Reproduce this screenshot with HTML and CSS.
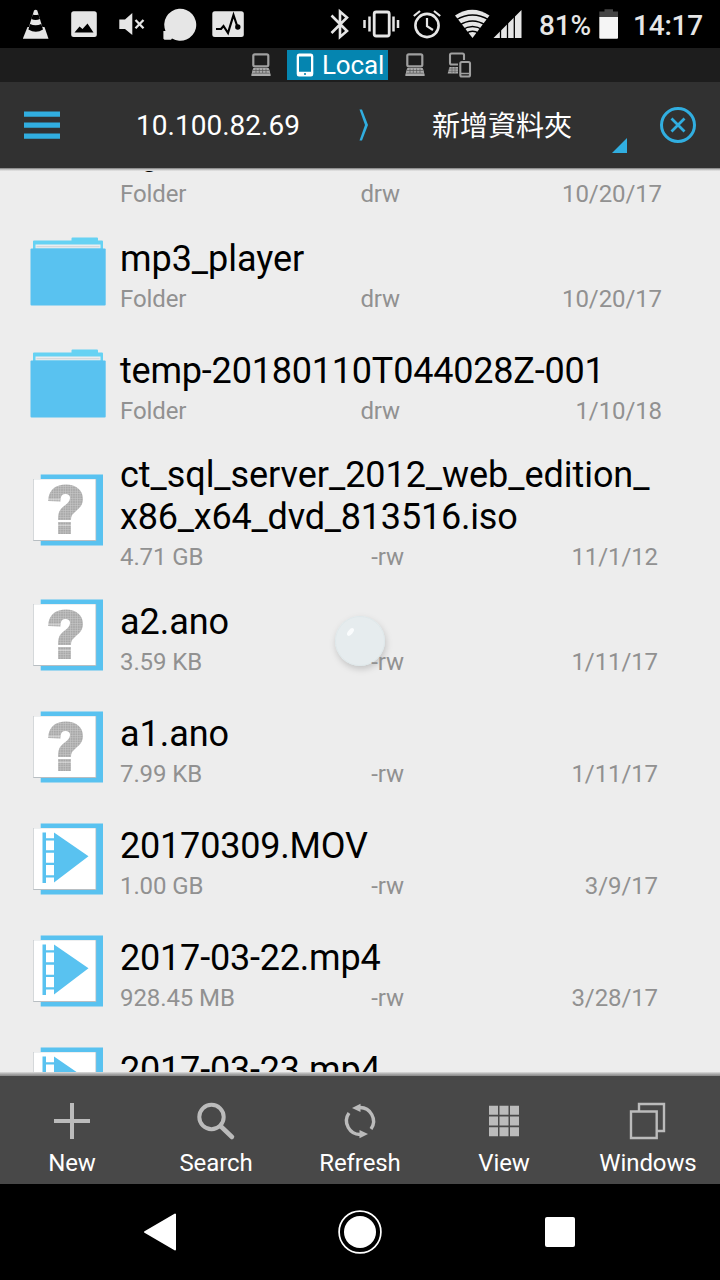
FILE: index.html
```
<!DOCTYPE html>
<html lang="en">
<head>
<meta charset="utf-8">
<title>File manager</title>
<link rel="stylesheet" href="styles.css">
</head>
<body>
<svg class="defs" width="0" height="0">
  <defs>
    <pattern id="weave" width="2.4" height="2.4" patternUnits="userSpaceOnUse">
      <rect width="2.4" height="2.4" fill="#a8a8a8"/>
      <path d="M0 2.1H2.4M2.1 0V2.4" stroke="#c8c8c8" stroke-width=".6"/>
    </pattern>
    <symbol id="folder" viewBox="0 0 80 80">
      <path d="M3 19V9.500a1 1 0 0 1 1-1H41.500V6.500a1 1 0 0 1 1-1H67a1 1 0 0 1 1 1V8.500H72a1 1 0 0 1 1 1V19z" fill="#66d2f3"/>
      <path d="M5.500 12.500h65v4h-65z" fill="#e9edf0"/>
      <path d="M6.500 14.700h63" stroke="#c9cdd0" stroke-width=".8"/>
      <rect x=".5" y="16.500" width="75.200" height="57" rx="1" fill="#59c2f0"/>
    </symbol>
    <symbol id="sheet" viewBox="0 0 80 80">
      <path d="M10.700 4.500H73V75.500H10.700z" fill="#59c2f0"/>
      <path d="M3.200 9H66.200V71H3.200z" fill="#b8bec2"/>
      <path d="M3.700 9.300H65.500V70H3.700z" fill="#fff"/>
    </symbol>
    <symbol id="unknown" viewBox="0 0 80 80">
      <use href="#sheet"/>
      <path d="M18 31C19 19 26 14.500 36 14.500C46 14.500 53 20 53 29C53 36 48 39 44 43C41.500 45 41 47 41 50H28C28 43 29 40 34 36C38 33 40 31 40 28C40 25 38 24 35 24C31.500 24 30.500 27 30.500 31.500ZM28 52H41V64H28Z" fill="url(#weave)"/>
      <path d="M18 29.300H30M28 55.300H41" stroke="#fff" stroke-width=".5"/>
    </symbol>
    <symbol id="video" viewBox="0 0 80 80">
      <use href="#sheet"/>
      <path d="M12.500 13.500H16V19.300H24V13.500L58.500 37.200L24 63.500V58.500H16V64H12.500ZM16 21.500V31.300H24V21.500ZM16 33.700V43.700H24V33.700ZM16 46V56.200H24V46Z" fill="#59c2f0" fill-rule="evenodd"/>
    </symbol>
    <symbol id="laptop" viewBox="0 0 20 24">
      <rect x="2.300" y="1.300" width="15" height="12" rx="1.500" fill="none" stroke="#a0a0a0" stroke-width="2.200"/>
      <path d="M2.500 15.500H17.500L19.300 22.500H.7Z" fill="#aaa" stroke="#aaa" stroke-linejoin="round"/>
      <path d="M2 17.500H18M1.500 20.200H18.500M5 15.500V20M8.300 15.500V20M11.600 15.500V20M15 15.500V20" stroke="#555" stroke-width=".7"/>
    </symbol>
  </defs>
</svg>
<main class="screen">
  <div class="status">
    <svg viewBox="23 0 48 48" width="48" height="48"><path d="M27.500 27H44.500L48.500 38.700H22.800Z" fill="#e6e6e6"/><path d="M34 10.500Q35.700 9 37.300 10.500L43.300 30Q36 34 28 30Z" fill="#e6e6e6"/><path d="M32.800 14.500Q35.600 15.500 38.500 14.500L40 19Q35.600 21 31.300 19ZM30 24Q35.600 26.500 41.300 24L43 29.500Q36 34 28.400 29.500Z" fill="#000"/></svg>
    <svg viewBox="71 0 48 48" width="48" height="48"><rect x="71.200" y="11.300" width="25.600" height="25.700" rx="2.500" fill="#e6e6e6"/><path d="M74.500 32.500L79.500 26.500L82.500 29L87.500 23.500L93.500 32.500Z" fill="#000"/></svg>
    <svg viewBox="119 0 44 48" width="44" height="48"><path d="M119.300 19.500H125L132.300 13V35L125 29H119.300Z" fill="#e6e6e6"/><path d="M135.500 20L143.500 28.300M143.500 20L135.500 28.300" stroke="#e6e6e6" stroke-width="2.300"/></svg>
    <svg viewBox="163 0 49 48" width="49" height="48"><path d="M163.400 31H165.500A16 16 0 1 1 172 38.500L171 39.700H164.500L163.400 38.700Z" fill="#e6e6e6"/></svg>
    <svg viewBox="212 0 118 48" width="118" height="48"><rect x="212.300" y="11.300" width="31.500" height="25.700" rx="2.500" fill="#e6e6e6"/><path d="M216 29H221L223.500 26L228 33L233.500 15L237.500 27" fill="none" stroke="#000" stroke-width="2.200"/><circle cx="237.800" cy="27" r="2.700"/></svg>
    <svg viewBox="330 0 33 48" width="33" height="48"><path d="M331.500 15.500L347 31L340 37V11.500L347 17.500L331.500 33" fill="none" stroke="#e6e6e6" stroke-width="2.600"/></svg>
    <svg viewBox="363 0 50 48" width="50" height="48"><rect x="374.200" y="12" width="15" height="24" rx="2" fill="none" stroke="#e6e6e6" stroke-width="2.800"/><path d="M364.500 20V28M369.500 16.500V31.500M393.500 16.500V31.500M398 20V28" stroke="#e6e6e6" stroke-width="2.500"/></svg>
    <svg viewBox="413 0 42 48" width="42" height="48"><circle cx="427" cy="25.500" r="11.600" fill="none" stroke="#e6e6e6" stroke-width="2.600"/><path d="M427 18V26.200L433 30M413.800 16L420 11M434 11L440.200 16" fill="none" stroke="#e6e6e6" stroke-width="2.200"/></svg>
    <svg viewBox="455 0 38 48" width="38" height="48"><path d="M455 15.500Q472.200 4 489.500 15.500L472.500 38Z" fill="#e6e6e6"/><path d="M456 20Q472.500 10 489 20M459 25.500Q472.500 16.500 486 25.500M462 30Q472.500 23 483 30M466 33.500Q472.500 29 479 33.500" fill="none" stroke="#000" stroke-width="1.300"/></svg>
    <svg viewBox="493 0 46 48" width="46" height="48"><path d="M493.500 38L521.500 10V38Z" fill="#e6e6e6"/><path d="M500.500 25V38M507.500 20V38M514.300 12V38" stroke="#000" stroke-width="1.300"/></svg>
    <span class="status-text">81%</span>
    <svg viewBox="599 0 36 48" width="36" height="48"><path d="M599.300 17V11.500H604.500V9.300H613V11.500H618V17Z" fill="#444"/><path d="M599.300 17H618V37.500Q618 38.700 617 38.700H600.300Q599.300 38.700 599.300 37.500Z" fill="#f5f5f5"/></svg>
    <span class="status-text clock">14:17</span>
  </div>

  <div class="tabs">
    <svg width="20" height="24"><use href="#laptop"/></svg>
    <div class="tab-active">
      <svg width="18" height="24" viewBox="0 0 18 24"><path fill-rule="evenodd" fill="#fff" d="M3 .5H15Q17.300 .5 17.300 3V21Q17.300 23.500 15 23.500H3Q.7 23.500 .7 21V3Q.7 .5 3 .5ZM3 3.500V18.700H15V3.500Z"/><circle cx="9" cy="21" r="1.100" fill="#0585b0"/></svg>
      <span>Local</span>
    </div>
    <svg class="tab-second" width="20" height="24"><use href="#laptop"/></svg>
    <svg class="tab-third" width="25" height="26" viewBox="0 0 25 26"><path d="M11 12.500H4.500Q3 12.500 3 11V3Q3 1.500 4.500 1.500H15.500Q17 1.500 17 3V8" fill="none" stroke="#a0a0a0" stroke-width="2.100"/><path d="M2.500 15H11V21.500H.7Z" fill="#aaa"/><path d="M1.500 17H11M1 19.300H11M5 15V21M8 15V21" stroke="#555" stroke-width=".6"/><rect x="13.300" y="10" width="9.700" height="14.500" rx="1.500" fill="#1d1d1d" stroke="#a0a0a0" stroke-width="2.100"/><path d="M14 21.500H22.500" stroke="#a0a0a0" stroke-width="1.500"/></svg>
  </div>

  <header class="header">
    <svg class="menu" width="36" height="28" viewBox="0 0 36 28"><path d="M0 .5H36V5.800H0ZM0 11.500H36V16.800H0ZM0 22.500H36V27.800H0Z" fill="#31aee0"/></svg>
    <span class="crumb">10.100.82.69</span>
    <svg class="arrow" width="10" height="34" viewBox="0 0 10 34"><path d="M.5 1.500H3L9 17L3 32.500H.5L6 17Z" fill="#31aee0"/></svg>
    <span class="crumb cjk">新增資料夾</span>
    <svg class="close" width="38" height="38" viewBox="0 0 38 38"><circle cx="19" cy="19" r="16.500" fill="none" stroke="#31aee0" stroke-width="3"/><path d="M12.500 12.500L25.500 25.500M25.500 12.500L12.500 25.500" stroke="#31aee0" stroke-width="2.800"/></svg>
    <svg class="corner" width="15" height="15" viewBox="0 0 15 15"><path d="M15 0V15H0Z" fill="#31aee0"/></svg>
  </header>
  <div class="shade-top"></div>

  <section class="list">
    <article class="row row-cut">
      <div class="info"><div class="name">ag</div><div class="meta"><span>Folder</span><span class="perm">drw</span><span class="date">10/20/17</span></div></div>
    </article>
    <article class="row">
      <svg class="icon"><use href="#folder"/></svg>
      <div class="info"><div class="name">mp3_player</div><div class="meta"><span>Folder</span><span class="perm">drw</span><span class="date">10/20/17</span></div></div>
    </article>
    <article class="row">
      <svg class="icon"><use href="#folder"/></svg>
      <div class="info"><div class="name tight">temp-20180110T044028Z-001</div><div class="meta"><span>Folder</span><span class="perm">drw</span><span class="date">1/10/18</span></div></div>
    </article>
    <article class="row">
      <svg class="icon"><use href="#unknown"/></svg>
      <div class="info"><div class="name">ct_sql_server_2012_web_edition_<br><span class="tight">x86_x64_dvd_813516.iso</span></div><div class="meta file"><span>4.71 GB</span><span class="perm">-rw</span><span class="date">11/1/12</span></div></div>
    </article>
    <article class="row touched">
      <svg class="touch" width="64" height="64" viewBox="0 0 64 64"><circle cx="32" cy="32" r="25" fill="#e6ecee"/><circle cx="32" cy="32" r="24.500" fill="none" stroke="#dfe8ea"/><ellipse cx="22.500" cy="23" rx="4.500" ry="2.300" transform="rotate(-50 22.500 23)" fill="#fafcfd"/></svg>
      <svg class="icon"><use href="#unknown"/></svg>
      <div class="info"><div class="name">a2.ano</div><div class="meta file"><span>3.59 KB</span><span class="perm">-rw</span><span class="date">1/11/17</span></div></div>
    </article>
    <article class="row">
      <svg class="icon"><use href="#unknown"/></svg>
      <div class="info"><div class="name">a1.ano</div><div class="meta file"><span>7.99 KB</span><span class="perm">-rw</span><span class="date">1/11/17</span></div></div>
    </article>
    <article class="row">
      <svg class="icon"><use href="#video"/></svg>
      <div class="info"><div class="name tight">20170309.MOV</div><div class="meta file"><span>1.00 GB</span><span class="perm">-rw</span><span class="date">3/9/17</span></div></div>
    </article>
    <article class="row">
      <svg class="icon"><use href="#video"/></svg>
      <div class="info"><div class="name tight">2017-03-22.mp4</div><div class="meta file"><span>928.45 MB</span><span class="perm">-rw</span><span class="date">3/28/17</span></div></div>
    </article>
    <article class="row">
      <svg class="icon"><use href="#video"/></svg>
      <div class="info"><div class="name tight">2017-03-23.mp4</div><div class="meta"></div></div>
    </article>
  </section>
  <div class="shade-bottom"></div>

  <nav class="toolbar">
    <div class="tool"><svg width="40" height="40" viewBox="0 0 40 40"><path d="M20 2V38M2 20H38" stroke="#bbb" stroke-width="4"/></svg><span>New</span></div>
    <div class="tool"><svg width="40" height="40" viewBox="0 0 40 40"><circle cx="15.500" cy="16" r="12.200" fill="none" stroke="#bbb" stroke-width="4"/><path d="M24.500 25L36 36" stroke="#bbb" stroke-width="4.500" stroke-linecap="round"/></svg><span>Search</span></div>
    <div class="tool"><svg width="40" height="40" viewBox="0 0 40 40"><path d="M19 6.600A13.600 13.600 0 0 1 31 28M21 33.400A13.600 13.600 0 0 1 9 12" fill="none" stroke="#bbb" stroke-width="3.400"/><path d="M12 7L20.500 2.800V11ZM28 33L19.500 37.200V29Z" fill="#bbb"/></svg><span>Refresh</span></div>
    <div class="tool"><svg width="40" height="40" viewBox="0 0 40 40"><path d="M5 4.700h9v9H5zM15.500 4.700h9v9h-9zM26 4.700h9v9h-9zM5 15.500h9v9H5zM15.500 15.500h9v9h-9zM26 15.500h9v9h-9zM5 26.200h9v9H5zM15.500 26.200h9v9h-9zM26 26.200h9v9h-9z" fill="#bbb"/></svg><span>View</span></div>
    <div class="tool"><svg width="40" height="40" viewBox="0 0 40 40"><path d="M3 10.500H28.700V37H3ZM11 10V3H36V30H29.500" fill="none" stroke="#bbb" stroke-width="2.400"/></svg><span>Windows</span></div>
  </nav>

  <nav class="system">
    <svg width="44" height="44" viewBox="0 0 44 44"><path d="M7 22L37 4.500V39.500Z" fill="#fff" stroke="#fff" stroke-width="2" stroke-linejoin="round"/></svg>
    <svg width="44" height="44" viewBox="0 0 44 44"><circle cx="22" cy="22" r="20.900" fill="none" stroke="#fff" stroke-width="1.700"/><circle cx="22" cy="22" r="16" fill="#fff"/></svg>
    <svg width="44" height="44" viewBox="0 0 44 44"><rect x="7" y="7" width="30" height="30" rx="2" fill="#fff"/></svg>
  </nav>
</main>
</body>
</html>
```
FILE: styles.css
```
* { box-sizing: border-box; }
body { margin: 0; background: #000; font-family: Roboto, "Noto Sans CJK TC", sans-serif; }
svg { display: block; flex: none; }
.defs { position: absolute; }
.screen { width: 720px; height: 1280px; display: flex; flex-direction: column; overflow: hidden; }
.status { height: 48px; display: grid; grid-template-columns: 48px 48px 44px 49px 118px 33px 50px 42px 38px 46px 60px 34px 1fr; padding-left: 23px; background: #000; }
.status-text { font-size: 28px; font-weight: 500; line-height: 51px; color: #e6e6e6; white-space: nowrap; letter-spacing: -0.2px; }
.clock { letter-spacing: -0.2px; }
.tabs { height: 34px; flex: none; display: flex; align-items: center; padding-left: 251px; background: #1d1d1d; }
.tab-active { display: flex; align-items: center; margin-left: 16px; padding: 0 0 0 9px; width: 101px; height: 30px; background: #0585b0; color: #fff; font-size: 26px; line-height: 28px; }
.tab-active span { margin: -1px 0 0 8px; letter-spacing: -0.15px; }
.tab-second { margin-left: 17px; }
.tab-third { margin-left: 22px; }
.header { position: relative; height: 86px; flex: none; display: grid; grid-template-columns: 84px 268px 24px 252px 92px; align-items: center; background: #313131; }
.menu { margin-left: 24px; }
.crumb { padding-top: 2px; text-align: center; font-size: 28px; line-height: 40px; color: #fff; }
.cjk { padding-top: 4px; }
.arrow { margin-left: 7px; }
.close { margin-left: 31px; }
.corner { position: absolute; left: 612px; bottom: 15px; }
.shade-top { height: 3px; flex: none; background: linear-gradient(#777, #d0d0d0 60%, #e4e4e4); }
.list { height: 901px; flex: none; overflow: hidden; background: #ededed; }
.row { min-height: 112px; display: flex; align-items: center; padding: 10px 0 10px 30px; }
.row-cut { height: 112px; margin-top: -60px; padding-left: 120px; }
.row-cut .name { margin: -2px 0 2px; }
.row-cut + .row { margin-top: -7px; }
.icon { width: 80px; height: 80px; margin-right: 10px; }
.info { flex: none; width: 600px; padding-top: 4px; }
.name { font-size: 36px; line-height: 42px; color: #000; white-space: nowrap; letter-spacing: -0.05px; }
.tight { letter-spacing: -0.2px; }
.meta { display: grid; grid-template-columns: 180px 100px 1fr; padding-right: 58px; height: 31px; font-size: 24px; line-height: 38px; color: #919191; white-space: nowrap; letter-spacing: -0.1px; }
.perm { text-align: right; }
.date { text-align: right; }
.file .perm { margin-right: -4px; }
.file .date { padding-right: 4px; }
.touched { position: relative; }
.touch { position: absolute; left: 328px; top: 30px; filter: drop-shadow(1px 3px 3px rgba(0,0,0,.17)); }
.touched .info { position: relative; }
.shade-bottom { height: 4px; flex: none; background: linear-gradient(#ddd, #aaa 50%, #888); }
.toolbar { height: 108px; flex: none; display: grid; grid-template-columns: repeat(5, 144px); background: #484848; }
.tool { display: flex; flex-direction: column; align-items: center; padding-top: 25px; color: #fff; font-size: 24px; line-height: 28px; gap: 8px; letter-spacing: -0.1px; }
.system { height: 96px; flex: none; display: flex; justify-content: center; align-items: center; gap: 156px; background: #000; }
```
